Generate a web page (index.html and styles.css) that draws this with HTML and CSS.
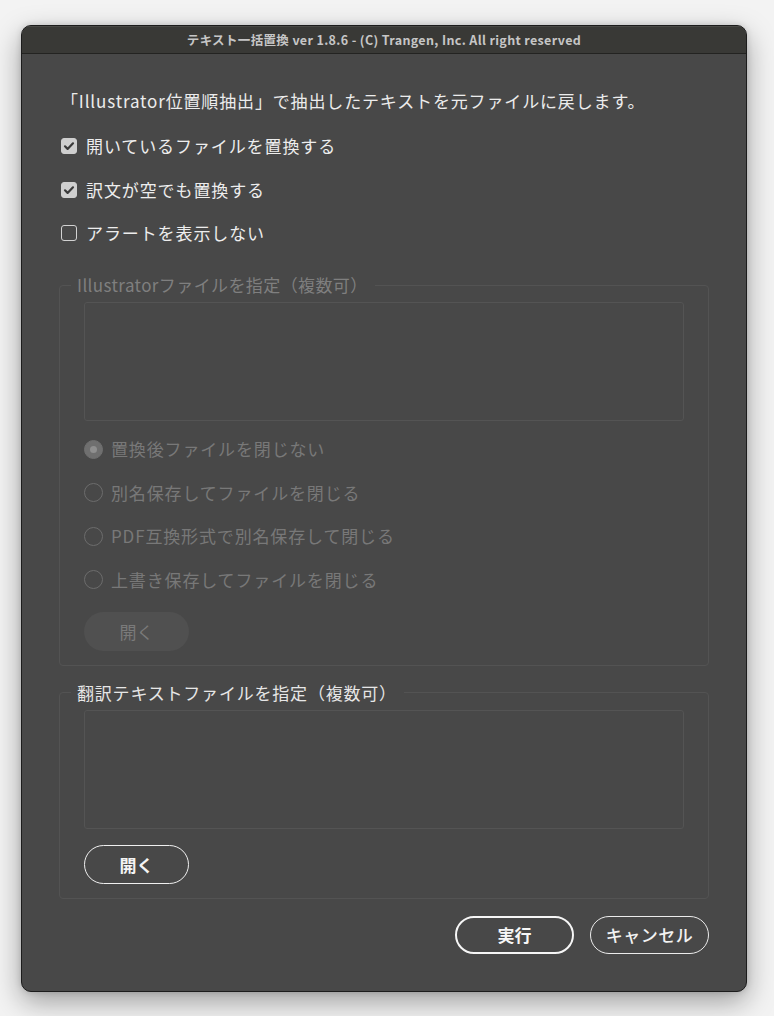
FILE: index.html
```html
<!DOCTYPE html>
<html lang="ja">
<head>
<meta charset="utf-8">
<link rel="stylesheet" href="styles.css">
</head>
<body>
<div class="window">
  <div class="titlebar">テキスト一括置換 ver 1.8.6 - (C) Trangen, Inc. All right reserved</div>
  <div class="content">
    <p class="intro">「Illustrator位置順抽出」で抽出したテキストを元ファイルに戻します。</p>
    <div class="checks">
      <label class="check"><span class="box on"><svg viewBox="0 0 16 16" width="16" height="16"><path d="M4 8.3l2.6 2.6L12 5.3" fill="none" stroke="#3a3a3a" stroke-width="2.2" stroke-linecap="round" stroke-linejoin="round"/></svg></span>開いているファイルを置換する</label>
      <label class="check"><span class="box on"><svg viewBox="0 0 16 16" width="16" height="16"><path d="M4 8.3l2.6 2.6L12 5.3" fill="none" stroke="#3a3a3a" stroke-width="2.2" stroke-linecap="round" stroke-linejoin="round"/></svg></span>訳文が空でも置換する</label>
      <label class="check"><span class="box"></span>アラートを表示しない</label>
    </div>
    <fieldset class="group disabled">
      <legend>Illustratorファイルを指定（複数可）</legend>
      <div class="listbox"></div>
      <div class="radios">
        <div class="radio"><span class="dot sel"></span>置換後ファイルを閉じない</div>
        <div class="radio"><span class="dot"></span>別名保存してファイルを閉じる</div>
        <div class="radio"><span class="dot"></span>PDF互換形式で別名保存して閉じる</div>
        <div class="radio"><span class="dot"></span>上書き保存してファイルを閉じる</div>
      </div>
      <div class="btn-row"><span class="btn off">開く</span></div>
    </fieldset>
    <fieldset class="group second">
      <legend>翻訳テキストファイルを指定（複数可）</legend>
      <div class="listbox"></div>
      <div class="btn-row small"><span class="btn open">開く</span></div>
    </fieldset>
    <div class="actions">
      <span class="btn primary">実行</span>
      <span class="btn cancel">キャンセル</span>
    </div>
  </div>
</div>
</body>
</html>
```
FILE: styles.css
```css
* { box-sizing: border-box; }
html, body { margin: 0; padding: 0; }
body {
  background: #f3f3f3;
  padding: 25px 0 0 21px;
  font-family: "Noto Sans CJK JP", "Noto Sans", sans-serif;
  height: 1016px;
  overflow: hidden;
}
.window {
  width: 726px;
  height: 967px;
  background: #484848;
  border: 1px solid #1c1c1c;
  border-radius: 10px;
  overflow: hidden;
  box-shadow: 0 10px 28px rgba(0,0,0,0.35), 0 0 6px rgba(0,0,0,0.15);
  display: flex;
  flex-direction: column;
}
.titlebar {
  height: 28px;
  flex: none;
  background: #393936;
  border-bottom: 1px solid #232321;
  color: #c6c6c6;
  font-size: 12.5px;
  font-weight: 700;
  line-height: 27px;
  text-align: center;
  letter-spacing: 0.35px;
  box-shadow: inset 0 1px 0 #4a4a46;
}
.content {
  padding: 35px 37px 0 37px;
  display: flex;
  flex-direction: column;
}
.intro {
  margin: 0 0 0 2px;
  color: #ececec;
  font-size: 17px;
  line-height: 24px;
  letter-spacing: 0.85px;
}
.checks {
  display: flex;
  flex-direction: column;
  gap: 19.5px;
  margin: 21px 0 0 2px;
}
.check {
  display: flex;
  align-items: center;
  gap: 9px;
  color: #ededed;
  font-size: 17px;
  line-height: 24px;
  letter-spacing: 0.9px;
}
.box {
  width: 16px;
  height: 16px;
  border-radius: 3px;
  border: 1.5px solid #d2d2d2;
  flex: none;
  display: flex;
  align-items: center;
  justify-content: center;
}
.box.on {
  background: #cfcfcf;
  border-color: #cfcfcf;
}
.box svg { display: block; flex: none; }
.group {
  margin: 28px 0 0 0;
  padding: 0 24px 14px 24px;
  border: 1px solid #535353;
  border-radius: 4px;
  min-width: 0;
}
.group.second { margin-top: 15px; }
.group legend {
  margin-left: -13px;
  padding: 0 7px 0 6px;
  font-size: 17px;
  line-height: 24px;
  letter-spacing: 0.8px;
  color: #e6e6e6;
}
.group.disabled legend { color: #7f7f7f; letter-spacing: 0.4px; }
.listbox {
  margin-top: 5px;
  height: 119px;
  border: 1px solid #545454;
  border-radius: 3px;
  background: #484848;
}
.radios {
  display: flex;
  flex-direction: column;
  gap: 19.5px;
  margin-top: 16px;
}
.radio {
  display: flex;
  align-items: center;
  gap: 8px;
  color: #787878;
  font-size: 17px;
  line-height: 24px;
  letter-spacing: 0.85px;
}
.dot {
  width: 19px;
  height: 19px;
  border-radius: 50%;
  border: 1.5px solid #6c6c6c;
  flex: none;
  display: flex;
  align-items: center;
  justify-content: center;
}
.dot.sel {
  background: #6f6f6f;
  border-color: #6f6f6f;
}
.dot.sel::after {
  content: "";
  width: 7px;
  height: 7px;
  border-radius: 50%;
  background: #8f8f8f;
}
.btn-row {
  display: flex;
  margin-top: 20px;
}
.btn-row.small { margin-top: 16px; }
.btn {
  display: flex;
  align-items: center;
  justify-content: center;
  font-size: 17px;
  border-radius: 20px;
}
.btn.off {
  width: 105px;
  height: 39px;
  background: #505050;
  color: #7a7a7a;
}
.btn.open {
  width: 105px;
  height: 39px;
  border: 1.5px solid #f0f0f0;
  color: #f4f4f4;
  font-weight: 700;
}
.actions {
  display: flex;
  justify-content: flex-end;
  gap: 16px;
  margin-top: 17px;
}
.btn.primary {
  width: 119px;
  height: 38px;
  border: 2.5px solid #f6f6f6;
  color: #f6f6f6;
  font-weight: 700;
}
.btn.cancel {
  width: 119px;
  height: 38px;
  border: 1.5px solid #ececec;
  color: #f2f2f2;
  font-weight: 500;
  letter-spacing: 0.5px;
}
```
